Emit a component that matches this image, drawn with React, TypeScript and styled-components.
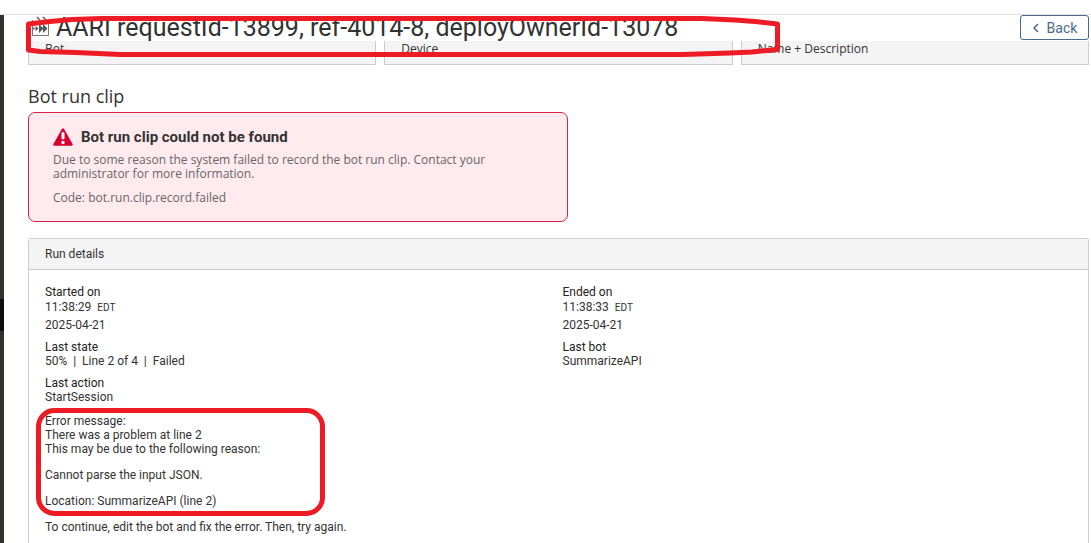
import React from "react";
import styled, { createGlobalStyle } from "styled-components";

const GlobalStyle = createGlobalStyle`
  * { box-sizing: border-box; }
  body {
    margin: 0;
    background: #fff;
    color: #333;
    font-family: "Open Sans", Roboto, sans-serif;
    font-size: 12px;
    line-height: 14px;
  }
  h1, h2, h3, p, dl, dd { margin: 0; }
`;

const Shell = styled.div`
  position: relative;
  display: flex;
  flex-direction: column;
  height: 100vh;
  overflow: hidden;
`;

const TopBar = styled.div`
  flex: none;
  height: 15px;
  border-bottom: 1px solid #e0e0e0;
`;

const Body = styled.div`
  display: flex;
  flex: 1;
  min-height: 0;
`;

const Rail = styled.nav`
  display: flex;
  flex: none;
  flex-direction: column;
  width: 4px;
  padding-top: 284px;
  background: #33302e;
`;

const RailMarker = styled.div`
  height: 32px;
  background: #0f0d0b;
`;

const Main = styled.main`
  display: flex;
  flex: 1;
  flex-direction: column;
  min-width: 0;
  padding: 0 2px 0 24px;
`;

const Header = styled.header`
  display: flex;
  flex: none;
  align-items: flex-start;
  justify-content: space-between;
  height: 26px;
`;

const TitleGroup = styled.div`
  display: flex;
  align-items: flex-start;
  gap: 6px;
  padding-left: 4px;
`;

const Title = styled.h1`
  font-family: Roboto, sans-serif;
  font-size: 25px;
  font-weight: 400;
  line-height: 26px;
  white-space: nowrap;
`;

const BackButton = styled.button`
  display: flex;
  align-items: center;
  justify-content: center;
  gap: 8px;
  width: 69px;
  height: 25px;
  padding: 0;
  border: 1px solid #4a6a8c;
  border-radius: 3px;
  background: #fff;
  color: #4a6a8c;
  font: 400 14px/20px Roboto, sans-serif;
`;

const SummaryRow = styled.div`
  display: grid;
  flex: none;
  grid-template-columns: repeat(3, 1fr);
  gap: 8px;
`;

const SummaryCard = styled.div`
  height: 24px;
  padding: 1px 16px;
  border: 1px solid #ccc;
  border-top: 0;
  background: #f4f4f4;
`;

const SectionTitle = styled.h2`
  margin-top: 19px;
  font-size: 18px;
  font-weight: 400;
  line-height: 24px;
`;

const Alert = styled.section`
  flex: none;
  max-width: 540px;
  margin-top: 4px;
  padding: 14px 24px 16px;
  border: 1px solid #d9214e;
  border-radius: 7px;
  background: #ffebee;
  color: #666;
`;

const AlertTitle = styled.h3`
  display: flex;
  align-items: center;
  gap: 8px;
  margin-bottom: 6px;
  color: #333;
  font-family: Roboto, sans-serif;
  font-size: 15px;
  font-weight: 700;
  line-height: 20px;
`;

const AlertText = styled.p`
  max-width: 450px;
  margin-bottom: 10px;
`;

const Code = styled.span`
  font-weight: 500;
`;

const Panel = styled.section`
  flex: 1 0 auto;
  margin-top: 16px;
  border: 1px solid #ccc;
  border-bottom: 0;
  border-radius: 3px 3px 0 0;
  font-family: Roboto, sans-serif;
`;

const PanelHeader = styled.h2`
  padding: 8px 16px 7px;
  border-bottom: 1px solid #ccc;
  background: #f4f4f4;
  font-size: 12px;
  font-weight: 400;
  line-height: 15px;
`;

const Details = styled.dl`
  display: grid;
  grid-template-columns: 1fr 1fr;
  gap: 8px;
  padding: 15px 16px 0;
`;

const Term = styled.dt`
  color: #222;
`;

const Time = styled.div`
  line-height: 16px;
`;

const Zone = styled.span`
  margin-left: 3px;
  font-size: 10px;
`;

const DateLine = styled.div`
  padding-top: 2px;
`;

const Message = styled.div`
  padding: 10px 16px 0;
`;

const Paragraph = styled.p`
  margin-bottom: 12px;
`;

const Markup = styled.svg`
  position: absolute;
  top: 0;
  left: 0;
  pointer-events: none;
`;

const RunIcon = () => (
  <svg width="18" height="22" viewBox="0 0 18 22" aria-hidden="true">
    <path d="M0.500 5V20.500H16.500V9" fill="none" stroke="#777" />
    <path d="M1 12.500h1.500v2H1zM3.500 11l3 2.500-3 2.500zM7 9l4.500 4.500L7 18zM11 9l4.500 4.500L11 18z" fill="#555" />
    <path d="M5 2l3 3M11 2l3 3" stroke="#666" strokeWidth="1.500" />
  </svg>
);

const WarningIcon = () => (
  <svg width="20" height="18" viewBox="0 0 20 18" aria-hidden="true">
    <path d="M10 1.500L18.500 16.500H1.500Z" fill="#d80032" stroke="#d80032" strokeWidth="2.500" strokeLinejoin="round" />
    <path d="M10 5.500V10" stroke="#fff" strokeWidth="3" strokeLinecap="round" />
    <circle cx="10" cy="14.500" r="1.700" fill="#fff" />
  </svg>
);

const details = [
  { term: "Last state", value: "50%  |  Line 2 of 4  |  Failed" },
  { term: "Last bot", value: "SummarizeAPI" },
  { term: "Last action", value: "StartSession" },
];

const Value = styled.dd`
  white-space: pre;
`;

const Stamp = ({ label, time }: { label: string; time: string }) => (
  <div>
    <Term>{label}</Term>
    <dd>
      <Time>
        {time} <Zone>EDT</Zone>
      </Time>
      <DateLine>2025-04-21</DateLine>
    </dd>
  </div>
);

export default function App() {
  return (
    <Shell>
      <GlobalStyle />
      <TopBar />
      <Body>
        <Rail>
          <RailMarker />
        </Rail>
        <Main>
          <Header>
            <TitleGroup>
              <RunIcon />
              <Title>AARI requestId-13899, ref-4014-8, deployOwnerId-13078</Title>
            </TitleGroup>
            <BackButton type="button">
              <svg width="7" height="10" viewBox="0 0 7 10" aria-hidden="true">
                <path d="M6 1L2 5l4 4" fill="none" stroke="currentColor" strokeWidth="1.500" />
              </svg>
              Back
            </BackButton>
          </Header>
          <SummaryRow>
            <SummaryCard>Bot</SummaryCard>
            <SummaryCard>Device</SummaryCard>
            <SummaryCard>Name + Description</SummaryCard>
          </SummaryRow>
          <SectionTitle>Bot run clip</SectionTitle>
          <Alert>
            <AlertTitle>
              <WarningIcon />
              Bot run clip could not be found
            </AlertTitle>
            <AlertText>
              Due to some reason the system failed to record the bot run clip. Contact your
              administrator for more information.
            </AlertText>
            <p>
              Code: <Code>bot.run.clip.record.failed</Code>
            </p>
          </Alert>
          <Panel>
            <PanelHeader>Run details</PanelHeader>
            <Details>
              <Stamp label="Started on" time="11:38:29" />
              <Stamp label="Ended on" time="11:38:33" />
              {details.map(({ term, value }) => (
                <div key={term}>
                  <Term>{term}</Term>
                  <Value>{value}</Value>
                </div>
              ))}
            </Details>
            <Message>
              <Paragraph>
                Error message:
                <br />
                There was a problem at line 2
                <br />
                This may be due to the following reason:
              </Paragraph>
              <Paragraph>Cannot parse the input JSON.</Paragraph>
              <Paragraph>Location: SummarizeAPI (line 2)</Paragraph>
              <Paragraph>To continue, edit the bot and fix the error. Then, try again.</Paragraph>
            </Message>
          </Panel>
        </Main>
      </Body>
      <Markup width="800" height="540" fill="none" stroke="#ed1c24" strokeWidth="5" strokeLinejoin="round" aria-hidden="true">
        <path d="M28.500 24L50 21.500L72 19.500L102 18.500H702L735 20L755 21.500L777.500 24V49.500L752 52L730 53L683 54.500H120L76 52.500L40 51.500L28.500 50Z" />
        <rect x="38.500" y="410.500" width="284" height="103" rx="16" />
      </Markup>
    </Shell>
  );
}
